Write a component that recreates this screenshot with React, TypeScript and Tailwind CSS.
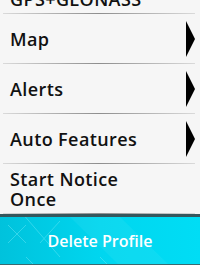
import React from "react";

type Item = { title: string; value?: string; arrow?: boolean };

const items: Item[] = [
  { title: "GNSS", value: "GPS+GLONASS" },
  { title: "Map", arrow: true },
  { title: "Alerts", arrow: true },
  { title: "Auto Features", arrow: true },
  { title: "Start Notice", value: "Once" },
];

function Arrow() {
  return (
    <svg width="9" height="36" viewBox="0 0 9 36" className="shrink-0">
      <polygon points="0,0 9,18 0,36" fill="#000" />
    </svg>
  );
}

function Row({ item }: { item: Item }) {
  return (
    <div className="relative h-[50px] flex items-center pl-[10px] pr-[5px]">
      <div className="flex-1 min-w-0 leading-[20px] text-[18px] tracking-[0.4px] font-semibold text-[#111]">
        <div>{item.title}</div>
        {item.value && <div>{item.value}</div>}
      </div>
      {item.arrow && <Arrow />}
      <div className="absolute left-[3px] right-[5px] bottom-0 h-px bg-gradient-to-r from-[#dadada] via-[#8e8e8e] to-[#dadada]" />
    </div>
  );
}

export default function App() {
  return (
    <div
      className="w-[200px] h-[265px] overflow-hidden bg-[#f6f6f6] flex flex-col"
      style={{ fontFamily: "'Open Sans', 'Noto Sans', sans-serif" }}
    >
      <div className="-mt-[36px] flex flex-col">
        {items.map((it) => (
          <Row key={it.title} item={it} />
        ))}
      </div>
      <div className="h-[3px] bg-[#35575d]" />
      <button className="relative flex-1 flex items-center justify-center bg-gradient-to-r from-[#00c2dc] via-[#00d6ef] to-[#00ddf5] overflow-hidden">
        <svg className="absolute inset-0" width="200" height="49" viewBox="0 0 200 49">
          <g stroke="#66e6f5" strokeWidth="1" opacity="0.5">
            <line x1="8" y1="8" x2="26" y2="26" />
            <line x1="26" y1="8" x2="8" y2="26" />
            <line x1="22" y1="-4" x2="60" y2="40" />
            <line x1="60" y1="4" x2="40" y2="26" />
            <line x1="26" y1="40" x2="44" y2="58" />
            <line x1="100" y1="40" x2="112" y2="52" />
          </g>
          <polygon points="70,0 120,49 170,49 120,0" fill="#ffffff" opacity="0.05" />
        </svg>
        <span className="relative text-[16px] font-semibold text-white">Delete Profile</span>
      </button>
      <div className="h-px bg-[#3a6a70]" />
    </div>
  );
}
